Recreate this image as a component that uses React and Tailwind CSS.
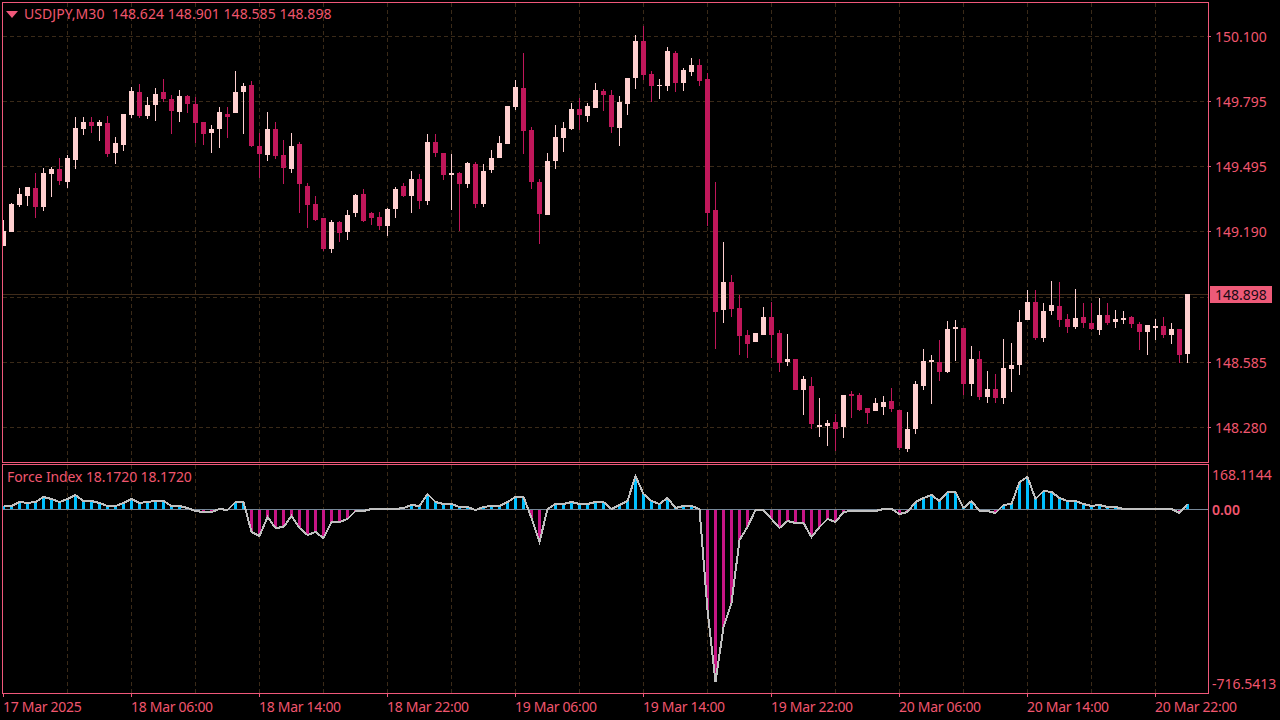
import React from 'react';

// [wick top, body top, body bottom, wick bottom, 1 = up candle]
const candles = [
  [220, 231, 246, 246, 1], [203, 204, 232, 232, 1], [188, 194, 205, 207, 1], [187, 187, 196, 206, 1], [173, 188, 207, 218, 0],
  [168, 173, 207, 211, 1], [167, 169, 174, 197, 1], [158, 169, 181, 185, 0], [155, 158, 182, 188, 1], [117, 128, 160, 169, 1],
  [117, 122, 129, 135, 1], [117, 122, 126, 133, 0], [120, 122, 126, 141, 1], [116, 123, 154, 157, 0], [137, 143, 153, 164, 1],
  [114, 114, 145, 151, 1], [87, 91, 115, 118, 1], [84, 92, 116, 118, 0], [97, 105, 116, 119, 1], [88, 94, 105, 121, 1],
  [79, 92, 99, 102, 0], [95, 99, 111, 134, 0], [90, 96, 112, 122, 1], [95, 96, 104, 113, 0], [97, 104, 123, 143, 0],
  [122, 122, 134, 145, 0], [125, 129, 133, 153, 1], [107, 112, 129, 148, 1], [107, 114, 117, 138, 0], [71, 92, 113, 113, 1],
  [83, 86, 92, 134, 1], [81, 85, 146, 147, 0], [133, 146, 154, 178, 0], [112, 129, 155, 161, 1], [122, 129, 156, 159, 0],
  [140, 155, 168, 184, 0], [133, 146, 169, 173, 1], [142, 144, 184, 213, 0], [183, 186, 205, 228, 0], [196, 204, 220, 221, 0],
  [218, 218, 249, 251, 0], [220, 222, 249, 253, 1], [221, 222, 233, 242, 0], [210, 215, 232, 240, 1], [194, 195, 213, 217, 1],
  [189, 194, 221, 222, 0], [212, 213, 218, 225, 0], [212, 217, 226, 230, 0], [208, 209, 226, 236, 1], [187, 189, 209, 218, 1],
  [183, 186, 196, 197, 0], [171, 179, 196, 213, 1], [174, 179, 201, 209, 0], [134, 142, 201, 205, 1], [134, 142, 153, 157, 0],
  [153, 153, 175, 180, 0], [154, 173, 175, 210, 1], [172, 173, 184, 231, 0], [162, 163, 184, 188, 1], [162, 164, 204, 208, 0],
  [164, 171, 204, 207, 1], [150, 158, 170, 173, 1], [136, 143, 158, 158, 1], [106, 106, 144, 144, 1], [80, 87, 107, 110, 1],
  [53, 88, 131, 154, 0], [127, 130, 182, 189, 0], [179, 182, 214, 244, 0], [153, 161, 215, 215, 1], [125, 137, 161, 169, 1],
  [122, 128, 138, 152, 1], [103, 109, 129, 130, 1], [98, 109, 115, 130, 0], [103, 106, 116, 122, 1], [83, 90, 108, 108, 1],
  [89, 91, 95, 111, 0], [90, 95, 127, 133, 0], [96, 102, 128, 146, 1], [78, 78, 104, 115, 1], [35, 41, 78, 89, 1],
  [26, 41, 75, 80, 0], [71, 74, 86, 102, 0], [79, 85, 86, 99, 1], [47, 51, 86, 91, 1], [51, 53, 83, 92, 0],
  [68, 70, 83, 91, 1], [58, 65, 72, 76, 1], [59, 65, 81, 86, 0], [73, 79, 213, 226, 0], [182, 210, 312, 349, 0],
  [242, 282, 310, 323, 1], [275, 282, 309, 317, 0], [295, 308, 336, 355, 0], [330, 335, 344, 358, 0], [333, 333, 342, 342, 1],
  [307, 317, 335, 335, 1], [302, 317, 335, 358, 0], [330, 333, 363, 372, 0], [334, 359, 362, 366, 1], [359, 359, 390, 390, 0],
  [376, 379, 390, 415, 1], [377, 386, 424, 429, 0], [398, 425, 427, 437, 1], [420, 423, 426, 446, 1], [414, 422, 429, 451, 0],
  [395, 395, 427, 438, 1], [391, 394, 396, 418, 0], [393, 395, 410, 411, 0], [408, 408, 413, 424, 0], [398, 403, 411, 411, 1],
  [396, 402, 407, 415, 1], [388, 401, 409, 412, 0], [410, 410, 448, 450, 0], [412, 429, 449, 452, 1], [381, 384, 429, 434, 1],
  [349, 361, 386, 390, 1], [355, 360, 362, 404, 1], [340, 362, 372, 381, 0], [321, 329, 372, 373, 1], [320, 327, 329, 361, 1],
  [328, 328, 384, 395, 0], [346, 359, 384, 396, 1], [351, 359, 397, 400, 0], [371, 389, 397, 403, 1], [374, 389, 398, 403, 0],
  [339, 368, 398, 404, 1], [343, 365, 369, 392, 1], [310, 322, 365, 375, 1], [290, 302, 320, 320, 1], [290, 302, 338, 340, 0],
  [303, 311, 338, 342, 1], [281, 305, 311, 315, 1], [282, 306, 320, 327, 0], [314, 319, 327, 333, 0], [289, 318, 327, 329, 1],
  [303, 317, 323, 328, 0], [303, 323, 329, 330, 0], [298, 315, 330, 335, 1], [303, 315, 323, 325, 0], [310, 319, 322, 328, 1],
  [311, 318, 320, 324, 1], [316, 317, 324, 328, 0], [322, 324, 332, 350, 0], [325, 325, 332, 355, 1], [319, 326, 328, 340, 1],
  [317, 326, 335, 338, 0], [323, 329, 335, 344, 1], [329, 329, 355, 363, 0], [294, 294, 354, 363, 1],
];

// force index line, page y for each candle
const force = [
  506, 506, 502, 503, 502, 497, 499, 502, 499, 495, 501, 501, 503, 506, 506, 503, 499, 503, 502, 501,
  501, 506, 506, 508, 511, 512, 512, 509, 510, 502, 502, 532, 536, 517, 528, 527, 516, 528, 535, 532,
  538, 522, 522, 519, 511, 511, 509, 509, 509, 509, 508, 505, 506, 494, 502, 504, 504, 507, 507, 510,
  507, 506, 506, 502, 497, 497, 518, 542, 509, 504, 504, 502, 504, 504, 502, 502, 509, 505, 501, 476,
  494, 501, 504, 498, 508, 506, 506, 509, 610, 682, 627, 603, 540, 527, 510, 510, 519, 528, 521, 523,
  523, 537, 527, 519, 522, 512, 511, 511, 511, 511, 509, 509, 514, 512, 502, 498, 495, 501, 492, 492,
  508, 501, 511, 511, 513, 505, 504, 482, 477, 499, 491, 492, 498, 501, 501, 504, 506, 505, 507, 507,
  509, 509, 509, 509, 509, 509, 509, 513, 504,
];

const gridX = Array.from({ length: 18 }, (_, i) => 67 + i * 64);
const gridY = [36, 101, 166, 231, 297, 362, 427];
const upperPrices = ['150.100', '149.795', '149.495', '149.190'];
const lowerPrices = ['148.585', '148.280'];
const timeLabels = [
  '17 Mar 2025', '18 Mar 06:00', '18 Mar 14:00', '18 Mar 22:00', '19 Mar 06:00',
  '19 Mar 14:00', '19 Mar 22:00', '20 Mar 06:00', '20 Mar 14:00', '20 Mar 22:00',
];

const cx = (i) => 3 + i * 8;

const MainChart = () => (
  <svg viewBox="3 3 1205 459" shapeRendering="crispEdges" className="block w-[1205px] h-[459px]">
    {gridY.map((y) => (
      <line key={y} x1="3" x2="1208" y1={y + 0.5} y2={y + 0.5} stroke="#3a2a18" strokeDasharray="4 3" />
    ))}
    {gridX.map((x) => (
      <line key={x} x1={x + 0.5} x2={x + 0.5} y1="3" y2="462" stroke="#3a2a18" strokeDasharray="4 3" />
    ))}
    <line x1="3" x2="1208" y1="294.5" y2="294.5" stroke="#402c1a" />
    {candles.map(([hi, top, bot, lo, up], i) => (
      <g key={i} fill={up ? '#ffd0d0' : '#c0175a'}>
        <rect x={cx(i)} y={hi} width="1" height={lo - hi} />
        <rect x={cx(i) - 2} y={top} width="5" height={bot - top} />
      </g>
    ))}
  </svg>
);

const ForceChart = () => (
  <svg viewBox="3 465 1205 228" className="block w-[1205px] h-[228px]">
    <g shapeRendering="crispEdges">
      {gridX.map((x) => (
        <line key={x} x1={x + 0.5} x2={x + 0.5} y1="465" y2="693" stroke="#3a2a18" strokeDasharray="4 3" />
      ))}
      {force.map((y, i) => (
        <rect
          key={i}
          x={cx(i) - 1}
          y={Math.min(y, 509)}
          width="3"
          height={Math.abs(y - 509)}
          fill={y < 509 ? '#00bfff' : '#c71585'}
        />
      ))}
      <line x1="3" x2="1208" y1="509.5" y2="509.5" stroke="#778899" />
      <polyline
        points={force.map((y, i) => `${cx(i) + 0.5},${y}`).join(' ')}
        fill="none"
        stroke="#c0c0c0"
        strokeWidth="2"
      />
    </g>
  </svg>
);

const PriceRow = ({ label }) => (
  <div className="flex h-[20px] items-center">
    <span className="self-start mt-[9px] w-[2px] h-[1px] bg-[#f0587a]" />
    <span className="ml-[4px]">{label}</span>
  </div>
);

export default function App() {
  return (
    <div className="w-[1280px] h-[720px] overflow-hidden bg-black pt-[2px] pl-[2px] text-[14px] leading-[20px] text-[#f0566e] font-['Noto_Sans',sans-serif]">
      {/* price pane */}
      <div className="flex h-[461px]">
        <div className="relative w-[1207px] shrink-0 border border-[#f0587a]">
          <MainChart />
          <div className="absolute left-[3px] top-[1px] flex items-center h-[20px] whitespace-pre">
            <svg width="12" height="7" viewBox="0 0 12 7" className="mr-[6px]">
              <path d="M0 0h12L6 7z" fill="#f0587a" />
            </svg>
            <span className="tracking-[0.05px]">USDJPY,M30  148.624 148.901 148.585 148.898</span>
          </div>
        </div>
        <div className="relative flex-1 flex flex-col gap-[45px] pt-[25px]">
          {upperPrices.map((p) => <PriceRow key={p} label={p} />)}
          <div className="h-[21px]" />
          {lowerPrices.map((p) => <PriceRow key={p} label={p} />)}
          <span className="absolute left-[1px] top-[284px] w-[62px] h-[17px] bg-[#ee5a78] text-[#1a0a14] pl-[5px] leading-[17px]">
            148.898
          </span>
        </div>
      </div>

      {/* force index pane */}
      <div className="flex h-[230px] mt-[1px]">
        <div className="relative w-[1207px] shrink-0 border border-[#f0587a]">
          <ForceChart />
          <span className="absolute left-[4px] top-[2px] tracking-[-0.1px]">Force Index 18.1720 18.1720</span>
        </div>
        <div className="flex-1 flex flex-col pl-[3px] pt-[1px]">
          <span>168.1144</span>
          <span className="mt-[15px] font-semibold">0.00</span>
          <span className="mt-[154px]">-716.5413</span>
        </div>
      </div>

      {/* time axis */}
      <div className="flex pl-[1px]">
        {timeLabels.map((t) => (
          <div key={t} className="w-[128px] shrink-0 h-[26px]">
            <div className="w-[1px] h-[3px] bg-[#f0587a]" />
            <div className="whitespace-nowrap tracking-[-0.3px]">{t}</div>
          </div>
        ))}
      </div>
    </div>
  );
}
